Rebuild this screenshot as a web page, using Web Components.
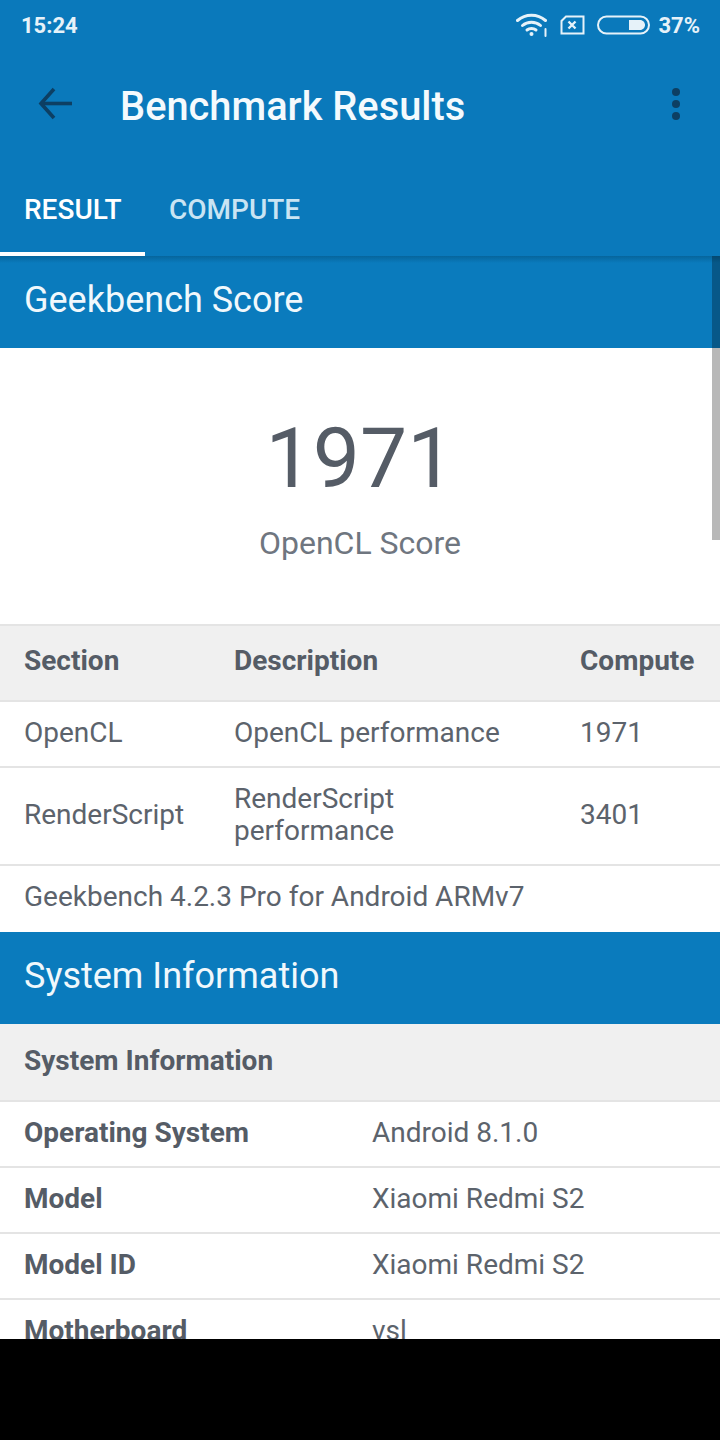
<!DOCTYPE html>
<html>
<head>
<meta charset="utf-8">
<title>Benchmark Results</title>
<style>
    html, body { margin: 0; height: 100%; background: #000; }
    body { font-family: Roboto, "Liberation Sans", sans-serif; width: 720px; height: 1440px; overflow: hidden; }
    #screen { position: relative; display: block; height: 1339px; overflow: hidden; background: #fff; }
</style>
</head>
<body>
<div id="screen">
    <gb-header></gb-header>
    <gb-section-title shadowed>Geekbench Score</gb-section-title>
    <gb-score value="1971" label="OpenCL Score"></gb-score>
    <gb-score-table></gb-score-table>
    <gb-section-title>System Information</gb-section-title>
    <gb-info-table></gb-info-table>
    <gb-scrollbar></gb-scrollbar>
</div>
<script>
class GbHeader extends HTMLElement {
    constructor() {
        super();
        this.attachShadow({mode: 'open'});
        this.shadowRoot.innerHTML = `
            <style>
                :host { display: block; height: 256px; background: #0a79bb; color: #fff; }
                .status { height: 50px; display: flex; align-items: center; padding: 0 20px 0 21px; font-size: 22px; font-weight: 700; color: #e6f2f9; }
                .status .time { flex: 1; }
                .status svg { display: block; }
                .wifi { margin-right: 12px; }
                .sim { margin-right: 12px; }
                .batt { margin-right: 8px; }
                .bar { height: 108px; display: flex; align-items: center; position: relative; }
                .back { margin-left: 36px; width: 40px; height: 40px; }
                h1 { margin: 5px 0 0 44px; flex: 1; font-size: 39.8px; font-weight: 500; line-height: 46px; color: #f4fafd; }
                .more { margin-right: 38px; width: 12px; height: 36px; }
                .tabs { height: 98px; display: flex; }
                .tab { font-size: 28px; font-weight: 500; line-height: 32px; padding: 36px 24px 0; box-sizing: border-box; height: 98px; color: #c9e4f3; }
                .tab.active { color: #fff; width: 145px; border-bottom: 4px solid #fff; }
            </style>
            <div class="status">
                <span class="time">15:24</span>
                <svg class="wifi" width="32" height="24" viewBox="0 0 32 24" fill="none" stroke="#e6f2f9" stroke-linecap="round">
                    <path d="M1.5 7.5C9.5 0.5 21.5 0.5 29.5 7.5" stroke-width="3"/>
                    <path d="M6.5 12.5C11.5 8 19.5 8 24.5 12.5" stroke-width="3"/>
                    <path d="M11 17C13.5 15 17.5 15 20 17" stroke-width="3"/>
                    <circle cx="15.5" cy="21" r="2" fill="#e6f2f9" stroke="none"/>
                    <path d="M29.5 16V23" stroke-width="2"/>
                </svg>
                <svg class="sim" width="25" height="20" viewBox="0 0 25 20" fill="none" stroke="#e6f2f9" stroke-width="2">
                    <path d="M6 1.5H23.5V18.5H1.5V6Z"/>
                    <path d="M8.5 6.5L15.5 13.5M15.5 6.5L8.5 13.5" stroke-width="2.4"/>
                </svg>
                <svg class="batt" width="53" height="20" viewBox="0 0 53 20" fill="none">
                    <rect x="1" y="1.5" width="51" height="17" rx="8.5" stroke="#e6f2f9" stroke-width="2"/>
                    <path d="M32 5H43C46 5 48 7.5 48 10C48 12.5 46 15 43 15H32Z" fill="#e6f2f9"/>
                </svg>
                <span>37%</span>
            </div>
            <div class="bar">
                <svg class="back" viewBox="0 0 40 40" fill="none" stroke="#0d3f63" stroke-width="3.6">
                    <path d="M36 19.5H6"/>
                    <path d="M18 5L5 19.5L18 34"/>
                </svg>
                <h1>Benchmark Results</h1>
                <svg class="more" viewBox="0 0 12 36" fill="#0d3f63">
                    <circle cx="6" cy="6" r="4"/>
                    <circle cx="6" cy="18" r="4"/>
                    <circle cx="6" cy="30" r="4"/>
                </svg>
            </div>
            <div class="tabs">
                <div class="tab active">RESULT</div>
                <div class="tab">COMPUTE</div>
            </div>`;
    }
}

class GbSectionTitle extends HTMLElement {
    constructor() {
        super();
        this.attachShadow({mode: 'open'});
        this.shadowRoot.innerHTML = `
            <style>
                :host { display: flex; align-items: center; height: 92px; padding: 0 24px 4px; box-sizing: border-box; background: #0a7bbd; color: #f0f8fc; font-size: 36px; line-height: 42px; }
                :host([shadowed]) { background: linear-gradient(#06659c, #0a7bbd 7px); }
            </style>
            <slot></slot>`;
    }
}

class GbScore extends HTMLElement {
    constructor() {
        super();
        this.attachShadow({mode: 'open'});
    }

    connectedCallback() {
        this.shadowRoot.innerHTML = `
            <style>
                :host { display: block; height: 276px; box-sizing: border-box; padding-top: 61px; text-align: center; }
                .value { font-size: 84px; line-height: 100px; font-weight: 400; color: #555c66; }
                .label { font-size: 32px; line-height: 36px; margin-top: 16px; color: #6f7680; }
            </style>
            <div class="value">${this.getAttribute('value')}</div>
            <div class="label">${this.getAttribute('label')}</div>`;
    }
}

const TABLE_STYLE = `
    :host { display: block; font-size: 28px; line-height: 32px; color: #5c636c; }
    .row { display: grid; align-items: center; box-sizing: border-box; padding-left: 24px; border-top: 2px solid #e4e4e4; padding-bottom: 2px; }
    .head { background: #f0f0f0; font-weight: 700; color: #555c66; }
    b { font-weight: 700; color: #555c66; }
`;

class GbScoreTable extends HTMLElement {
    constructor() {
        super();
        this.attachShadow({mode: 'open'});
        const rows = [
            ['OpenCL', 'OpenCL performance', '1971', 66],
            ['RenderScript', 'RenderScript<br>performance', '3401', 98]
        ];
        const body = rows.map(r => `
            <div class="row cols" style="height:${r[3]}px">
                <div>${r[0]}</div><div class="desc">${r[1]}</div><div>${r[2]}</div>
            </div>`).join('');
        this.shadowRoot.innerHTML = `
            <style>
                ${TABLE_STYLE}
                .cols { grid-template-columns: 210px 346px 1fr; }
                .foot { height: 68px; padding-bottom: 4px; }
            </style>
            <div class="row cols head" style="height:76px; padding-bottom:4px">
                <div>Section</div><div>Description</div><div>Compute</div>
            </div>
            ${body}
            <div class="row foot">Geekbench 4.2.3 Pro for Android ARMv7</div>`;
    }
}

class GbInfoTable extends HTMLElement {
    constructor() {
        super();
        this.attachShadow({mode: 'open'});
        const rows = [
            ['Operating System', 'Android 8.1.0'],
            ['Model', 'Xiaomi Redmi S2'],
            ['Model ID', 'Xiaomi Redmi S2'],
            ['Motherboard', 'vsl']
        ];
        const body = rows.map(r => `
            <div class="row cols"><b>${r[0]}</b><div>${r[1]}</div></div>`).join('');
        this.shadowRoot.innerHTML = `
            <style>
                ${TABLE_STYLE}
                .row { border-top: 0; border-bottom: 2px solid #e4e4e4; padding-bottom: 2px; }
                .cols { grid-template-columns: 348px 1fr; height: 66px; }
                .head { height: 78px; }
            </style>
            <div class="row head">System Information</div>
            ${body}`;
    }
}

class GbScrollbar extends HTMLElement {
    constructor() {
        super();
        this.attachShadow({mode: 'open'});
        this.shadowRoot.innerHTML = `
            <style>
                :host { position: absolute; right: 0; top: 256px; width: 8px; height: 284px; background: rgba(0, 0, 0, 0.28); }
            </style>`;
    }
}

customElements.define('gb-header', GbHeader);
customElements.define('gb-section-title', GbSectionTitle);
customElements.define('gb-score', GbScore);
customElements.define('gb-score-table', GbScoreTable);
customElements.define('gb-info-table', GbInfoTable);
customElements.define('gb-scrollbar', GbScrollbar);
</script>
</body>
</html>
